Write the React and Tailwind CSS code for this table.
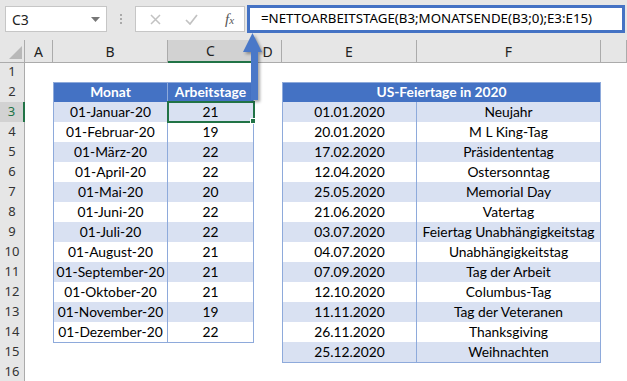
const COLS = 'grid grid-cols-[25px_28px_115px_86px_28px_135px_184px_26px]'

const MONTHS = [
  ['01-Januar-20', 21],
  ['01-Februar-20', 19],
  ['01-März-20', 22],
  ['01-April-20', 22],
  ['01-Mai-20', 20],
  ['01-Juni-20', 22],
  ['01-Juli-20', 22],
  ['01-August-20', 21],
  ['01-September-20', 21],
  ['01-Oktober-20', 21],
  ['01-November-20', 19],
  ['01-Dezember-20', 22],
]

const HOLIDAYS = [
  ['01.01.2020', 'Neujahr'],
  ['20.01.2020', 'M L King-Tag'],
  ['17.02.2020', 'Präsidententag'],
  ['12.04.2020', 'Ostersonntag'],
  ['25.05.2020', 'Memorial Day'],
  ['21.06.2020', 'Vatertag'],
  ['03.07.2020', 'Feiertag Unabhängigkeitstag'],
  ['04.07.2020', 'Unabhängigkeitstag'],
  ['07.09.2020', 'Tag der Arbeit'],
  ['12.10.2020', 'Columbus-Tag'],
  ['11.11.2020', 'Tag der Veteranen'],
  ['26.11.2020', 'Thanksgiving'],
  ['25.12.2020', 'Weihnachten'],
]

const cellFont = "font-['Lato',sans-serif] text-[13.8px] text-black"
const uiFont = "font-['Noto_Sans',sans-serif]"

function Cell({ children, shaded, first, head, className = '' }) {
  return (
    <div
      className={`flex items-center justify-center pt-[1px] border-r border-b border-[#8eaadb] whitespace-nowrap overflow-hidden ${first ? 'border-l' : ''} ${head ? 'border-t bg-[#4472c4] font-bold text-white' : shaded ? 'bg-[#d9e1f2]' : 'bg-white'} ${className}`}
    >
      {children}
    </div>
  )
}

function RowHead({ n, active }) {
  return (
    <div
      className={`flex items-center justify-center border-b border-[#d4d4d4] text-[13px] ${uiFont} ${active ? 'bg-[#d2d2d2] text-[#217346] border-r-2 border-r-[#217346]' : 'bg-[#e6e6e6] text-[#333] border-r border-r-[#ababab]'}`}
    >
      {n}
    </div>
  )
}

function SheetRow({ n }) {
  const m = n >= 3 && n <= 14 ? MONTHS[n - 3] : null
  const h = n >= 3 && n <= 15 ? HOLIDAYS[n - 3] : null
  const shaded = n % 2 === 1
  return (
    <div className={`${COLS} h-[20px] ${cellFont}`}>
      <RowHead n={n} active={n === 3} />
      <div />
      {n === 2 ? (
        <>
          <Cell head first>Monat</Cell>
          <Cell head>Arbeitstage</Cell>
        </>
      ) : m ? (
        <>
          <Cell first shaded={shaded}>{m[0]}</Cell>
          <Cell shaded={shaded}>{m[1]}</Cell>
        </>
      ) : (
        <>
          <div />
          <div />
        </>
      )}
      <div />
      {n === 2 ? (
        <Cell head first className="col-span-2">US-Feiertage in 2020</Cell>
      ) : h ? (
        <>
          <Cell first shaded={shaded}>{h[0]}</Cell>
          <Cell shaded={shaded}>{h[1]}</Cell>
        </>
      ) : (
        <>
          <div />
          <div />
        </>
      )}
      <div />
    </div>
  )
}

function Toolbar() {
  return (
    <div className={`flex h-[40px] bg-[#e6e6e6] ${uiFont}`}>
      <div className="ml-[5px] mt-[6px] flex h-[26px] w-[102px] items-center justify-between border border-[#c6c6c6] bg-white pl-[6px] pr-[6px] text-[14px] text-[#222]">
        <span>C3</span>
        <svg width="9" height="5" viewBox="0 0 9 5">
          <path d="M0 0h9L4.5 5z" fill="#777" />
        </svg>
      </div>
      <div className="ml-[13px] mt-[14px] flex h-[10px] flex-col justify-between">
        <span className="block h-[2px] w-[2px] bg-[#aaa]" />
        <span className="block h-[2px] w-[2px] bg-[#aaa]" />
        <span className="block h-[2px] w-[2px] bg-[#aaa]" />
      </div>
      <div className="ml-[13px] mt-[6px] flex h-[26px] w-[110px] items-center border border-[#c6c6c6] bg-white">
        <svg className="ml-[14px]" width="11" height="11" viewBox="0 0 11 11">
          <path d="M1 1l9 9M10 1l-9 9" stroke="#c2c2c2" strokeWidth="1.5" />
        </svg>
        <svg className="ml-[24px]" width="13" height="11" viewBox="0 0 13 11">
          <path d="M1 6l4 4 7-9" stroke="#c2c2c2" strokeWidth="1.7" fill="none" />
        </svg>
        <span className="ml-[27px] font-['Liberation_Serif',serif] text-[15px] italic text-[#555]">
          f<span className="text-[11px]">x</span>
        </span>
      </div>
      <div className="ml-[2px] mt-[5px] flex h-[28px] flex-1 items-center border-[3px] border-[#4472c4] bg-white pl-[11px] mr-[2px] text-[13.3px] text-black whitespace-nowrap overflow-hidden">
        =NETTOARBEITSTAGE(B3;MONATSENDE(B3;0);E3:E15)
      </div>
    </div>
  )
}

function ColumnHeads() {
  const letters = ['A', 'B', 'C', 'D', 'E', 'F', '']
  return (
    <div className={`${COLS} h-[22px] bg-[#e6e6e6] text-[14px] text-[#222] ${uiFont}`}>
      <div className="relative border-r border-b border-[#ababab]">
        <svg className="absolute right-[2px] bottom-[3px]" width="13" height="13" viewBox="0 0 13 13">
          <path d="M13 0v13H0z" fill="#b8b8b8" />
        </svg>
      </div>
      {letters.map((l, i) => (
        <div
          key={i}
          className={`flex items-center justify-center border-r border-[#ababab] ${l === 'C' ? 'bg-[#d2d2d2] border-b-2 border-b-[#217346]' : 'border-b border-b-[#ababab]'}`}
        >
          {l}
        </div>
      ))}
    </div>
  )
}

export default function App() {
  const rows = Array.from({ length: 16 }, (_, i) => i + 1)
  return (
    <div className="relative h-[381px] w-[627px] overflow-hidden bg-white">
      <Toolbar />
      <ColumnHeads />
      {rows.map((n) => (
        <SheetRow key={n} n={n} />
      ))}

      {/* active cell C3 with fill handle */}
      <div className="absolute left-[167px] top-[101px] h-[22px] w-[88px] border-2 border-[#217346]" />
      <div className="absolute left-[250px] top-[118px] h-[6px] w-[6px] border border-white bg-[#217346]" />

      {/* callout arrow from formula bar */}
      <svg
        className="absolute left-[240px] top-[30px] drop-shadow-[2px_2px_1.5px_rgba(0,0,0,0.35)]"
        width="30"
        height="75"
        viewBox="0 0 30 75"
      >
        <path d="M12.5 3L22 22h-4v48h-7V22H3z" fill="#4a78c8" />
      </svg>
    </div>
  )
}
